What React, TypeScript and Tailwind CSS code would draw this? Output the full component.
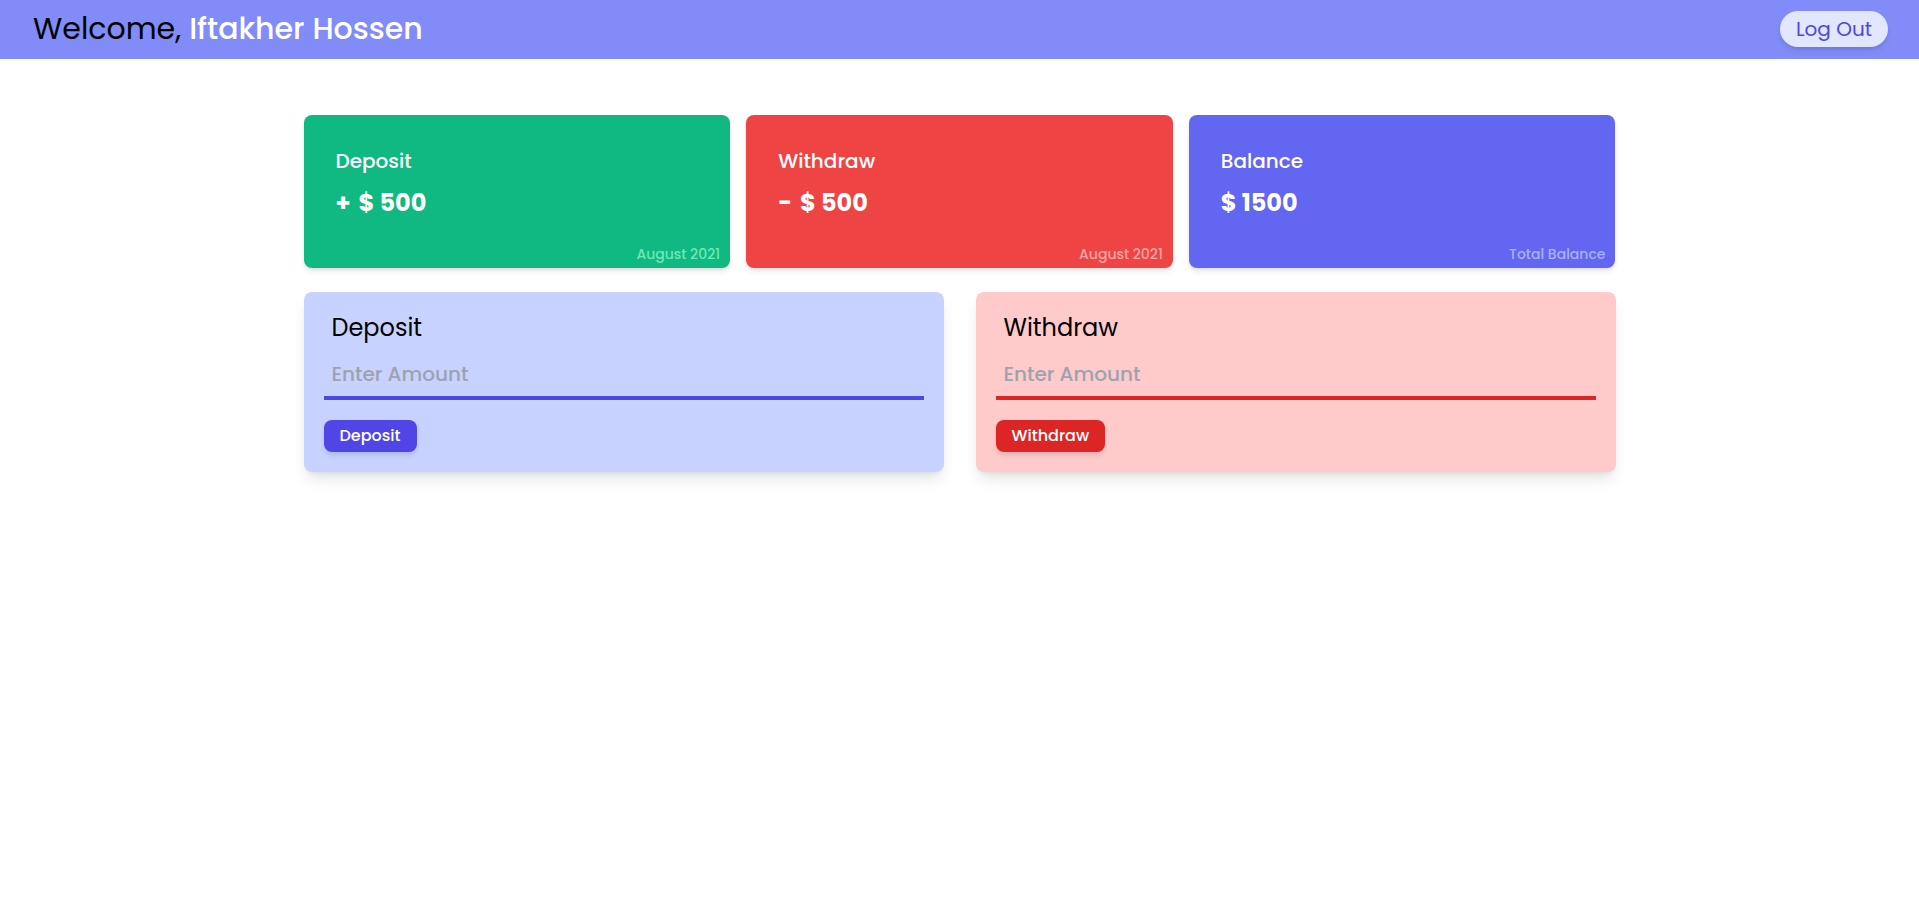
import React from "react";

type Summary = {
  title: string;
  sign?: string;
  amount: string;
  caption: string;
  card: string;
  captionColor: string;
};

const summaries: Summary[] = [
  { title: "Deposit", sign: "+", amount: "$ 500", caption: "August 2021", card: "bg-[#10b981]", captionColor: "text-[#6ee7b7]" },
  { title: "Withdraw", sign: "-", amount: "$ 500", caption: "August 2021", card: "bg-[#ef4444]", captionColor: "text-[#fca5a5]" },
  { title: "Balance", amount: "$ 1500", caption: "Total Balance", card: "bg-[#6366f1]", captionColor: "text-[#a5b4fc]" },
];

function SummaryCard({ title, sign, amount, caption, card, captionColor }: Summary) {
  return (
    <section className={`rounded-lg pt-8 pb-1 text-white shadow-md ${card}`}>
      <h2 className="px-8 text-xl font-medium">{title}</h2>
      <p className="mt-3 flex gap-2 px-8 text-2xl font-bold">
        {sign && <span>{sign}</span>}
        <span>{amount}</span>
      </p>
      <p className={`mt-[25px] px-[10px] text-right text-sm font-medium ${captionColor}`}>{caption}</p>
    </section>
  );
}

type FormProps = {
  id: string;
  title: string;
  panel: string;
  line: string;
  button: string;
};

function AmountForm({ id, title, panel, line, button }: FormProps) {
  return (
    <form className={`rounded-lg p-5 shadow-lg ${panel}`} onSubmit={(e) => e.preventDefault()}>
      <label htmlFor={id} className="block px-2 text-2xl text-black">
        {title}
      </label>
      <input
        id={id}
        type="text"
        inputMode="decimal"
        placeholder="Enter Amount"
        className={`mt-2 block w-full border-b-4 bg-transparent p-2 text-xl font-medium outline-none placeholder:text-[#9ca3af] ${line}`}
      />
      <button type="submit" className={`mt-5 block rounded-lg px-4 py-1 text-base font-medium text-white shadow-md ${button}`}>
        {title}
      </button>
    </form>
  );
}

export default function App() {
  return (
    <div className="min-h-screen bg-white font-['Poppins','Inter',sans-serif]">
      <header className="flex items-center justify-between bg-[#818cf8] pt-[11px] pr-[31px] pb-3 pl-[33px]">
        <h1 className="text-3xl text-black">
          Welcome, <span className="font-medium text-white">Iftakher Hossen</span>
        </h1>
        <button type="button" className="rounded-full bg-[#e0e7ff] px-4 py-1 text-xl text-[#4f46e5] shadow-md">
          Log Out
        </button>
      </header>
      <main className="container mx-auto mt-14 px-28">
        <div className="grid grid-cols-3 gap-4">
          {summaries.map((s) => (
            <SummaryCard key={s.title} {...s} />
          ))}
        </div>
        <div className="mt-6 grid grid-cols-2 gap-8">
          <AmountForm id="deposit-amount" title="Deposit" panel="bg-[#c7d2fe]" line="border-[#4f46e5]" button="bg-[#4f46e5]" />
          <AmountForm id="withdraw-amount" title="Withdraw" panel="bg-[#fecaca]" line="border-[#dc2626]" button="bg-[#dc2626]" />
        </div>
      </main>
    </div>
  );
}
